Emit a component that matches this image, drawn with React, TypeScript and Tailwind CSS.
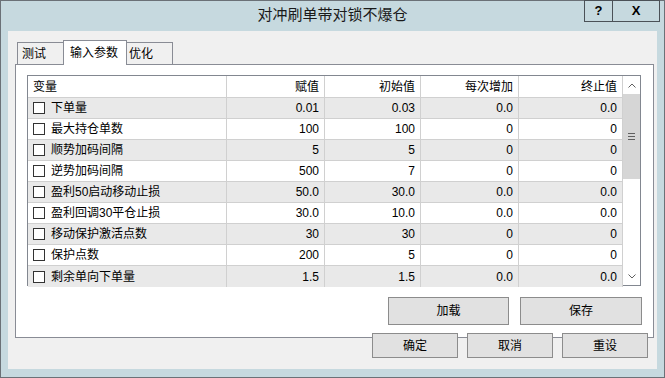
const rows = [
  ["下单量", "0.01", "0.03", "0.0", "0.0"],
  ["最大持仓单数", "100", "100", "0", "0"],
  ["顺势加码间隔", "5", "5", "0", "0"],
  ["逆势加码间隔", "500", "7", "0", "0"],
  ["盈利50启动移动止损", "50.0", "30.0", "0.0", "0.0"],
  ["盈利回调30平仓止损", "30.0", "10.0", "0.0", "0.0"],
  ["移动保护激活点数", "30", "30", "0", "0"],
  ["保护点数", "200", "5", "0", "0"],
  ["剩余单向下单量", "1.5", "1.5", "0.0", "0.0"],
];

const Chevron = ({ up }: { up?: boolean }) => (
  <svg width="8" height="5" viewBox="0 0 8 5">
    <polyline
      points={up ? "0.5,4.5 4,1 7.5,4.5" : "0.5,0.5 4,4 7.5,0.5"}
      fill="none"
      stroke="#606060"
      strokeWidth="1"
    />
  </svg>
);

const Cell = ({ w, children }: { w: string; children?: React.ReactNode }) => (
  <div className={`${w} h-full border-r border-[#d0d0d0] flex items-center justify-end pr-[5px]`}>
    {children}
  </div>
);

const App = () => {
  return (
    <div className="w-[665px] h-[378px] border border-[#6b7177] bg-[#c6d9df] flex flex-col text-[12px] text-black font-['Liberation_Sans','Noto_Sans_CJK_SC',sans-serif]">
      {/* title bar */}
      <div className="relative h-[30px] shrink-0 flex items-center justify-center">
        <span className="text-[15px] pb-[2px] text-[#1a1a1a]">对冲刷单带对锁不爆仓</span>
        <div className="absolute right-[4px] top-[-1px] flex h-[22px] border border-[#4b5157]">
          <div className="w-[28px] border-r border-[#4b5157] flex items-center justify-center font-bold text-[13px]">?</div>
          <div className="w-[46px] flex items-center justify-center font-bold text-[13px]">X</div>
        </div>
      </div>

      {/* client */}
      <div className="mx-[7px] h-[338px] bg-[#f0f0f0] flex flex-col pt-[9px] pl-[7px] pr-[3px]">
        {/* tabs */}
        <div className="flex items-end h-[24px] pl-[2px]">
          <div className="w-[46px] h-[22px] border-l border-t border-[#898c95] bg-[#f0f0f0] flex items-center pl-[4px]">测试</div>
          <div className="relative z-10 mb-[-1px] w-[64px] h-[25px] border-l border-t border-r border-[#898c95] bg-white flex items-center pl-[6px] pb-[1px]">
            输入参数
          </div>
          <div className="w-[46px] h-[22px] border-t border-r border-[#898c95] bg-[#f0f0f0] flex items-center pl-[2px]">优化</div>
        </div>

        {/* panel */}
        <div className="h-[274px] border border-[#898c95] bg-white flex flex-col pt-[10px] pl-[11px]">
          <div className="w-[614px] h-[211px] border border-[#828790] flex">
            <div className="w-[595px] flex flex-col">
              <div className="flex h-[22px] shrink-0 border-b border-[#d0d0d0] bg-white">
                <div className="w-[199px] h-full border-r border-[#d0d0d0] flex items-center pl-[5px]">变量</div>
                <Cell w="w-[98px]">赋值</Cell>
                <Cell w="w-[96px]">初始值</Cell>
                <Cell w="w-[98px]">每次增加</Cell>
                <Cell w="w-[104px]">终止值</Cell>
              </div>
              {rows.map((r, i) => (
                <div
                  key={r[0]}
                  className={`flex h-[21px] shrink-0 border-[#d0d0d0] ${i < rows.length - 1 ? "border-b" : ""} ${i % 2 === 0 ? "bg-[#e9e9e9]" : "bg-white"}`}
                >
                  <div className="w-[199px] h-full border-r border-[#d0d0d0] flex items-center pl-[5px] gap-[6px]">
                    <div className="w-[12px] h-[12px] border border-[#333] bg-white" />
                    <span>{r[0]}</span>
                  </div>
                  <Cell w="w-[98px]">{r[1]}</Cell>
                  <Cell w="w-[96px]">{r[2]}</Cell>
                  <Cell w="w-[98px]">{r[3]}</Cell>
                  <Cell w="w-[104px]">{r[4]}</Cell>
                </div>
              ))}
            </div>
            {/* scrollbar */}
            <div className="w-[17px] flex flex-col bg-white">
              <div className="h-[17px] mt-[1px] flex items-center justify-center">
                <Chevron up />
              </div>
              <div className="h-[85px] bg-[#d6d6d6] flex flex-col items-center justify-center gap-[2px]">
                <div className="w-[7px] h-[1px] bg-[#606060]" />
                <div className="w-[7px] h-[1px] bg-[#606060]" />
                <div className="w-[7px] h-[1px] bg-[#606060]" />
              </div>
              <div className="flex-1" />
              <div className="h-[17px] flex items-center justify-center">
                <Chevron />
              </div>
            </div>
          </div>

          <div className="flex justify-end gap-[11px] mt-[11px] pr-[11px]">
            <button className="w-[121px] h-[28px] bg-[#e1e1e1] border border-[#8c8c8c]">加载</button>
            <button className="w-[122px] h-[28px] bg-[#e1e1e1] border border-[#8c8c8c]">保存</button>
          </div>
        </div>

        {/* dialog buttons */}
        <div className="flex justify-end gap-[9px] mt-[-5px] pr-[6px]">
          <button className="w-[86px] h-[25px] bg-[#e1e1e1] border border-[#8c8c8c] flex items-center justify-center">确定</button>
          <button className="w-[86px] h-[25px] bg-[#e1e1e1] border border-[#8c8c8c] flex items-center justify-center">取消</button>
          <button className="w-[86px] h-[25px] bg-[#e1e1e1] border border-[#8c8c8c] flex items-center justify-center">重设</button>
        </div>
      </div>
    </div>
  );
};

export default App;
